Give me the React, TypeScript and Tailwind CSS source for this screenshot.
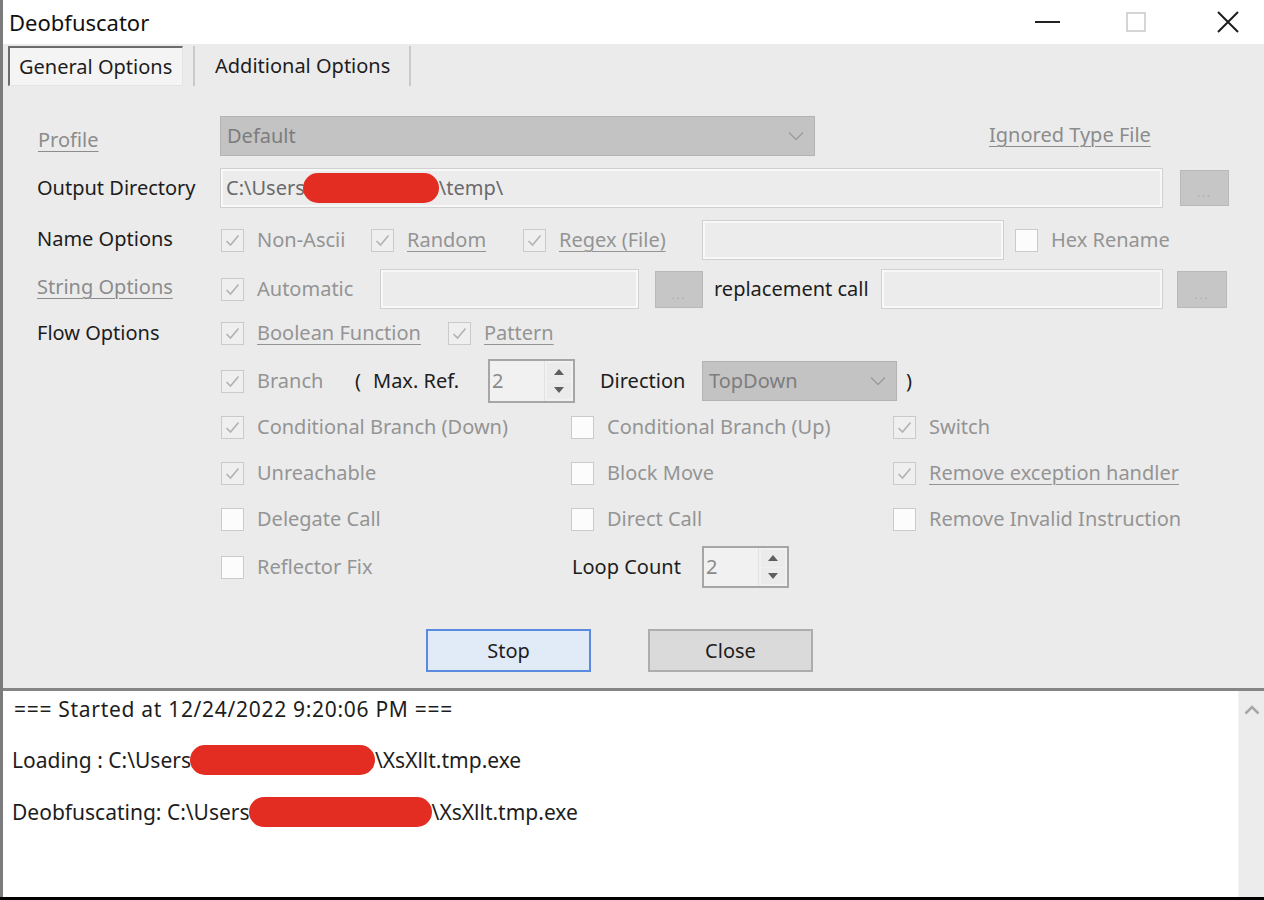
import React from "react";

const Cb = ({ checked }: { checked?: boolean }) => (
  <div
    className={`w-[23px] h-[23px] shrink-0 border-[1.5px] border-[#cacaca] flex items-center justify-center ${
      checked ? "bg-[#efefef]" : "bg-[#fcfcfc]"
    }`}
  >
    {checked && (
      <svg width="17" height="17" viewBox="0 0 17 17">
        <path d="M2.5 9 L6.5 13 L14.5 3.5" fill="none" stroke="#b2b2b2" strokeWidth="1.6" />
      </svg>
    )}
  </div>
);

const CbItem = ({
  checked,
  label,
  underline,
  w,
}: {
  checked?: boolean;
  label: string;
  underline?: boolean;
  w?: string;
}) => (
  <div className={`flex items-center ${w ?? ""}`}>
    <Cb checked={checked} />
    <span className={`ml-[13px] text-[#949494] whitespace-nowrap ${underline ? "underline underline-offset-[4px] decoration-1" : ""}`}>
      {label}
    </span>
  </div>
);

const Dots = ({ w, h }: { w: string; h: string }) => (
  <div className={`${w} ${h} shrink-0 bg-[#c6c6c6] border border-[#b9b9b9] flex items-end justify-center pb-[7px]`}>
    <span className="text-[#a8a8a8] text-[11px] leading-none tracking-[2px]">...</span>
  </div>
);

const TextBox = ({ w, children }: { w: string; children?: React.ReactNode }) => (
  <div className={`${w} h-[40px] shrink-0 border border-[#d0d0d0] shadow-[inset_0_0_0_2px_#f8f8f8] bg-[#ececec] flex items-center pl-[5px] text-[#6a6a6a] whitespace-nowrap overflow-hidden`}>
    {children}
  </div>
);

const Combo = ({ w, text }: { w: string; text: string }) => (
  <div className={`${w} h-[40px] shrink-0 bg-[#c3c3c3] border border-[#b3b3b3] flex items-center justify-between pl-[6px] pr-[10px] text-[#7d7d7d]`}>
    <span>{text}</span>
    <svg width="16" height="10" viewBox="0 0 16 10">
      <path d="M1 1.5 L8 8.5 L15 1.5" fill="none" stroke="#9b9b9b" strokeWidth="1.3" />
    </svg>
  </div>
);

const Spin = ({ h }: { h: string }) => (
  <div className={`w-[87px] ${h} shrink-0 border-2 border-[#a6a6a6] bg-[#f1f1f1] flex`}>
    <div className="flex-1 flex items-center pl-[2px] text-[#8a8a8a]">2</div>
    <div className="w-[29px] flex flex-col border-l border-[#e2e2e2] p-[2px] gap-[1px]">
      <div className="flex-1 bg-[#ebebeb] flex items-center justify-center">
        <svg width="10" height="6" viewBox="0 0 10 6">
          <path d="M0 6 L5 0 L10 6 Z" fill="#5f5f5f" />
        </svg>
      </div>
      <div className="flex-1 bg-[#ebebeb] flex items-center justify-center">
        <svg width="10" height="6" viewBox="0 0 10 6">
          <path d="M0 0 L5 6 L10 0 Z" fill="#5f5f5f" />
        </svg>
      </div>
    </div>
  </div>
);

const Blob = ({ w, ml }: { w: string; ml?: string }) => (
  <span className={`inline-block align-middle shrink-0 ${w} h-[30px] rounded-full bg-[#e32d22] ${ml ?? ""}`} />
);

export default function App() {
  return (
    <div className="w-[1264px] h-[900px] overflow-hidden bg-black font-['Noto_Sans',sans-serif] text-[20px] text-[#1d1d1d] leading-none">
      <div className="h-[897px] flex flex-col border-l-[3px] border-[#7b7b7b]">
        {/* Title bar */}
        <div className="h-[44px] bg-white flex items-center shrink-0">
          <span className="ml-[6px] text-[22px] text-[#111]">Deobfuscator</span>
          <div className="flex-1" />
          <svg width="25" height="4" viewBox="0 0 25 4">
            <rect x="0" y="1" width="25" height="2" fill="#222" />
          </svg>
          <svg className="ml-[66px]" width="20" height="20" viewBox="0 0 20 20">
            <rect x="1" y="1" width="18" height="18" fill="none" stroke="#c8c8c8" strokeWidth="1.5" />
          </svg>
          <svg className="ml-[71px] mr-[25px]" width="22" height="22" viewBox="0 0 22 22">
            <path d="M1 1 L21 21 M21 1 L1 21" stroke="#1d1d1d" strokeWidth="2" />
          </svg>
        </div>

        {/* Body */}
        <div className="h-[644px] bg-[#ebebeb] flex flex-col shrink-0">
          {/* Tabs */}
          <div className="h-[44px] flex items-stretch pt-[2px] pb-[2px] shrink-0">
            <div className="ml-[5px] w-[175px] border-t-2 border-l-2 border-[#6c6c6c] border-r border-b border-r-[#e4e4e4] border-b-[#e4e4e4] bg-[#f4f4f4] flex items-center pl-[9px]">
              General Options
            </div>
            <div className="ml-[10px] w-[2px] bg-[#c9c9c9]" />
            <div className="w-[214px] flex items-center pl-[20px]">Additional Options</div>
            <div className="w-[2px] bg-[#c9c9c9]" />
          </div>

          <div className="flex flex-col pl-[34px]">
            {/* Profile */}
            <div className="flex items-center h-[40px] mt-[28px]">
              <div className="w-[183px] shrink-0 pl-[1px] text-[#8c8c8c] underline underline-offset-[4px] decoration-1 pt-[8px]">Profile</div>
              <Combo w="w-[595px]" text="Default" />
              <div className="ml-[174px] text-[#8c8c8c] underline underline-offset-[4px] decoration-1 pb-[2px] whitespace-nowrap">Ignored Type File</div>
            </div>

            {/* Output */}
            <div className="flex items-center h-[40px] mt-[12px]">
              <div className="w-[183px] shrink-0 whitespace-nowrap">Output Directory</div>
              <TextBox w="w-[943px]">
                <span>C:\Users</span>
                <Blob w="w-[136px]" ml="-ml-[2px]" />
                <span>\temp\</span>
              </TextBox>
              <div className="ml-[17px]">
                <Dots w="w-[49px]" h="h-[36px]" />
              </div>
            </div>

            {/* Name */}
            <div className="flex items-center h-[40px] mt-[12px]">
              <div className="w-[184px] shrink-0 pb-[2px]">Name Options</div>
              <CbItem checked label="Non-Ascii" w="w-[150px]" />
              <CbItem checked label="Random" underline w="w-[152px]" />
              <CbItem checked label="Regex (File)" underline w="w-[179px]" />
              <TextBox w="w-[302px]" />
              <div className="ml-[11px]">
                <CbItem label="Hex Rename" />
              </div>
            </div>

            {/* String */}
            <div className="flex items-center h-[40px] mt-[9px]">
              <div className="w-[184px] shrink-0 text-[#8c8c8c] underline underline-offset-[4px] decoration-1 pb-[4px]">String Options</div>
              <CbItem checked label="Automatic" w="w-[159px]" />
              <TextBox w="w-[259px]" />
              <div className="ml-[16px]">
                <Dots w="w-[48px]" h="h-[37px]" />
              </div>
              <div className="ml-[11px] w-[167px] shrink-0 whitespace-nowrap">replacement call</div>
              <TextBox w="w-[282px]" />
              <div className="ml-[14px]">
                <Dots w="w-[50px]" h="h-[37px]" />
              </div>
            </div>

            {/* Flow */}
            <div className="flex items-center h-[40px] mt-[4px]">
              <div className="w-[184px] shrink-0">Flow Options</div>
              <CbItem checked label="Boolean Function" underline w="w-[227px]" />
              <CbItem checked label="Pattern" underline />
            </div>

            {/* Branch */}
            <div className="flex items-center h-[44px] mt-[6px]">
              <div className="w-[184px] shrink-0" />
              <CbItem checked label="Branch" w="w-[134px]" />
              <span>(</span>
              <span className="ml-[12px] w-[115px] shrink-0">Max. Ref.</span>
              <Spin h="h-[44px]" />
              <span className="ml-[25px] w-[102px] shrink-0">Direction</span>
              <Combo w="w-[195px]" text="TopDown" />
              <span className="ml-[9px]">)</span>
            </div>

            {/* Cond */}
            <div className="flex items-center h-[40px] mt-[4px]">
              <div className="w-[184px] shrink-0" />
              <CbItem checked label="Conditional Branch (Down)" w="w-[350px]" />
              <CbItem label="Conditional Branch (Up)" w="w-[322px]" />
              <CbItem checked label="Switch" />
            </div>

            <div className="flex items-center h-[40px] mt-[6px]">
              <div className="w-[184px] shrink-0" />
              <CbItem checked label="Unreachable" w="w-[350px]" />
              <CbItem label="Block Move" w="w-[322px]" />
              <CbItem checked label="Remove exception handler" underline />
            </div>

            <div className="flex items-center h-[40px] mt-[6px]">
              <div className="w-[184px] shrink-0" />
              <CbItem label="Delegate Call" w="w-[350px]" />
              <CbItem label="Direct Call" w="w-[322px]" />
              <CbItem label="Remove Invalid Instruction" />
            </div>

            <div className="flex items-center h-[44px] mt-[6px]">
              <div className="w-[184px] shrink-0" />
              <CbItem label="Reflector Fix" w="w-[351px]" />
              <span className="w-[130px] shrink-0 whitespace-nowrap">Loop Count</span>
              <Spin h="h-[42px]" />
            </div>

            {/* Buttons */}
            <div className="flex items-center h-[43px] mt-[40px]">
              <div className="ml-[389px] w-[165px] h-[43px] bg-[#e1ebf8] border-2 border-[#5a8be0] flex items-center justify-center">
                Stop
              </div>
              <div className="ml-[57px] w-[165px] h-[43px] bg-[#dadada] border-2 border-[#adadad] flex items-center justify-center">
                Close
              </div>
            </div>
          </div>
        </div>

        {/* Separator */}
        <div className="h-[3px] bg-[#858585] shrink-0" />

        {/* Log */}
        <div className="flex-1 bg-white flex text-[21px]">
          <div className="flex-1 flex flex-col pt-[6px]">
            <div className="ml-[11px] h-[24px] flex items-center whitespace-nowrap tracking-[0.7px]">=== Started at 12/24/2022 9:20:06 PM ===</div>
            <div className="ml-[9px] mt-[26px] h-[26px] flex items-center whitespace-nowrap">
              <span>Loading : C:\Users</span>
              <Blob w="w-[185px]" ml="-ml-[1px]" />
              <span>\XsXllt.tmp.exe</span>
            </div>
            <div className="ml-[9px] mt-[26px] h-[26px] flex items-center whitespace-nowrap">
              <span>Deobfuscating: C:\Users</span>
              <Blob w="w-[183px]" ml="-ml-[1px]" />
              <span>\XsXllt.tmp.exe</span>
            </div>
          </div>
          <div className="w-[26px] bg-[#ececec] border-l border-[#f2f2f2] flex justify-center pt-[14px]">
            <svg width="16" height="10" viewBox="0 0 16 10">
              <path d="M1.5 8.5 L8 2 L14.5 8.5" fill="none" stroke="#a6a6a6" strokeWidth="2.5" />
            </svg>
          </div>
        </div>
      </div>
    </div>
  );
}
